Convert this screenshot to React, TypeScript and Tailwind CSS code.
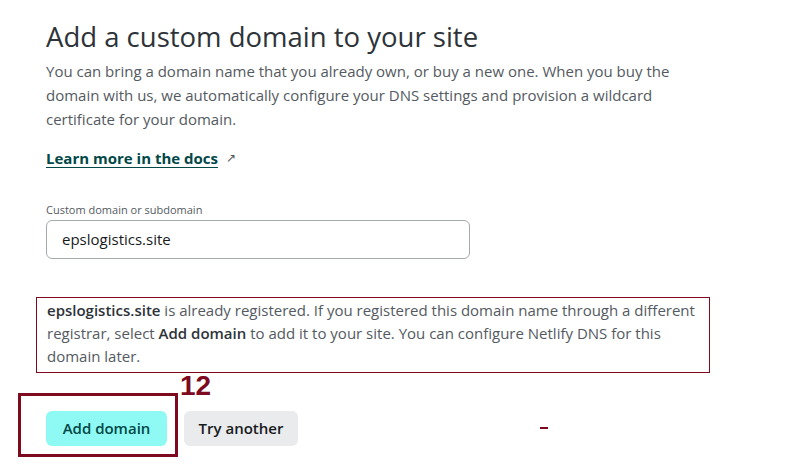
import React from "react";

const annot = "#7d0a1e";

export default function App() {
  return (
    <div
      className="relative min-h-[468px] w-[785px] bg-white pl-[46px] pt-[17px] text-[#545a61]"
      style={{ fontFamily: '"Open Sans", "Noto Sans", sans-serif' }}
    >
      <h1 className="text-[27.5px] leading-[40px] font-medium text-[#2d3339]">
        Add a custom domain to your site
      </h1>
      <p className="mt-[2px] text-[15px] leading-[24px]">
        You can bring a domain name that you already own, or buy a new one. When you buy the
        <br />
        domain with us, we automatically configure your DNS settings and provision a wildcard
        <br />
        certificate for your domain.
      </p>

      <div className="mt-[15px] flex items-center gap-[8px]">
        <a
          href="#"
          className="text-[15px] font-bold leading-[24px] text-[#014847] underline underline-offset-[3px]"
        >
          Learn more in the docs
        </a>
        <span className="text-[12px] text-[#545a61]">↗</span>
      </div>

      <div className="mt-[32px] w-[424px]">
        <label className="block text-[11px] leading-[16px] text-[#545a61]">
          Custom domain or subdomain
        </label>
        <div className="mt-[2px] flex h-[39px] items-center rounded-[6px] border border-[#a3a9ac] px-[15px] text-[15px] text-[#181a1c]">
          epslogistics.site
        </div>
      </div>

      {/* registered notice */}
      <div
        className="mt-[38px] -ml-[10px] w-[674px] border pl-[10px] pr-[6px] pt-[1px] pb-[4px] text-[15px] leading-[23px]"
        style={{ borderColor: annot }}
      >
        <strong className="font-semibold text-[#2d3339]">epslogistics.site</strong> is already
        registered. If you registered this domain name through a different registrar, select{" "}
        <strong className="font-semibold text-[#2d3339]">Add domain</strong> to add it to your
        site. You can configure Netlify DNS for this domain later.
      </div>

      <div className="mt-[38px] flex gap-[17px]">
        <button className="h-[35px] w-[121px] rounded-[6px] bg-[#8efaf3] text-[15px] font-semibold text-[#014847]">
          Add domain
        </button>
        <button className="h-[35px] w-[114px] rounded-[6px] bg-[#e9ebed] text-[15px] font-semibold text-[#181a1c]">
          Try another
        </button>
      </div>

      {/* annotation overlay */}
      <div
        className="absolute left-[18px] top-[393px] h-[64px] w-[160px] border-[3px]"
        style={{ borderColor: annot }}
      />
      <div
        className="absolute left-[180px] top-[369px] text-[28px] font-bold leading-[34px]"
        style={{ color: annot, fontFamily: '"Liberation Sans", Arial, sans-serif' }}
      >
        12
      </div>
      <div className="absolute left-[540px] top-[427px] h-[2px] w-[8px]" style={{ backgroundColor: annot }} />
    </div>
  );
}
